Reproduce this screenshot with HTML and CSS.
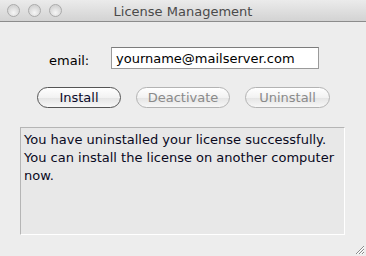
FILE: index.html
```html
<!DOCTYPE html>
<html lang="en">
<head>
  <meta charset="UTF-8" />
  <title>License Management</title>
  <link rel="stylesheet" href="styles.css">
</head>
<body>
  <div class="window">
    <div class="titlebar">
      <div class="lights">
        <span class="light"></span>
        <span class="light"></span>
        <span class="light"></span>
      </div>
      <div class="title">License Management</div>
    </div>

    <div class="content">
      <div class="email-row">
        <label class="email-label" for="email">email:</label>
        <input class="email-input" id="email" type="text" value="yourname@mailserver.com" />
      </div>

      <div class="buttons">
        <button class="btn btn-install">Install</button>
        <button class="btn btn-deactivate" disabled>Deactivate</button>
        <button class="btn btn-uninstall" disabled>Uninstall</button>
      </div>

      <div class="message">You have uninstalled your license successfully. You can install the license on another computer now.</div>
    </div>

    <svg class="grip" width="12" height="12" viewBox="0 0 12 12">
      <path d="M11 3 L3 11 M11 6 L6 11 M11 9 L9 11" stroke="#8a8a8a" stroke-width="1" />
      <path d="M11 4 L4 11 M11 7 L7 11 M11 10 L10 11" stroke="#fff" stroke-width="1" />
    </svg>
  </div>
</body>
</html>
```

FILE: styles.css
```css
body {
  margin: 0;
  padding: 0;
  background: #ededed;
  font-family: "DejaVu Sans", "Liberation Sans", sans-serif;
  font-size: 13px;
  color: #000;
}
.window {
  position: relative;
  width: 366px;
  height: 256px;
  background: #ededed;
  overflow: hidden;
}
.titlebar {
  position: relative;
  height: 21px;
  background: linear-gradient(#ebebeb, #d3d3d3);
  border-bottom: 1px solid #8c8c8c;
  display: flex;
  align-items: center;
  justify-content: center;
}
.lights {
  position: absolute;
  left: 7px;
  top: 4px;
  display: flex;
  gap: 8px;
}
.light {
  width: 13px;
  height: 13px;
  border-radius: 50%;
  box-sizing: border-box;
  border: 1px solid #aaa;
  background: radial-gradient(circle at 50% 70%, #f6f6f6, #d4d4d4 70%);
}
.title {
  color: #4a4a4a;
  font-size: 13px;
  padding-top: 1px;
}
.content {
  padding: 25px 21px 0 20px;
}
.email-row {
  display: flex;
  align-items: center;
  padding-left: 29px;
  gap: 25px;
}
.email-label {
  width: 37px;
  padding-top: 4px;
}
.email-input {
  width: 208px;
  height: 22px;
  box-sizing: border-box;
  border: 1px solid #9a9a9a;
  border-top-color: #7c7c7c;
  background: #fff;
  font-family: inherit;
  font-size: 13px;
  padding: 1px 4px 0;
  margin: 0;
  color: #000;
  outline: none;
}
.buttons {
  display: flex;
  gap: 15px;
  margin-top: 18px;
  padding-left: 17px;
}
.btn {
  height: 21px;
  box-sizing: border-box;
  border-radius: 11px;
  font-family: inherit;
  font-size: 13px;
  padding: 0;
  margin: 0;
  background: linear-gradient(#ffffff, #f2f2f2 50%, #e4e4e4 51%, #f7f7f7);
}
.btn-install {
  width: 84px;
  border: 1px solid #555;
  color: #0b0b2a;
}
.btn-deactivate {
  width: 94px;
  border: 1px solid #b3b3b3;
  color: #8a8a8a;
}
.btn-uninstall {
  width: 85px;
  border: 1px solid #b3b3b3;
  color: #8a8a8a;
}
.message {
  margin-top: 19px;
  width: 325px;
  height: 108px;
  box-sizing: border-box;
  border: 1px solid #b5b5b5;
  border-right-color: #fff;
  border-bottom-color: #fff;
  background: #e8e8e8;
  padding: 3px 6px 0 3px;
  line-height: 18px;
  color: #0a0a1e;
}
.grip {
  position: absolute;
  right: 1px;
  bottom: 1px;
}
```
